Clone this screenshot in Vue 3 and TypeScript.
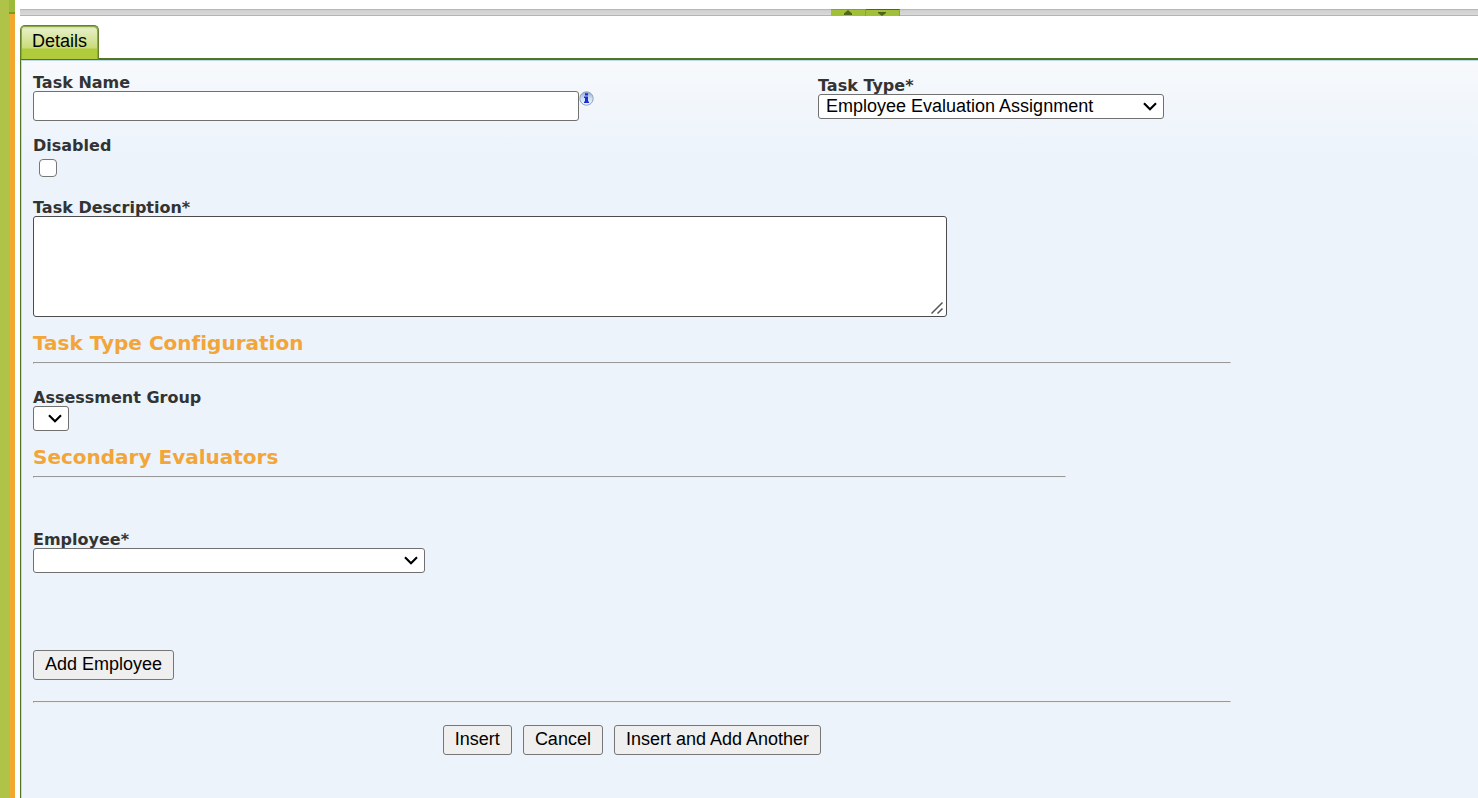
<script setup lang="ts">
import { ref } from 'vue'

const taskName = ref('')
const taskType = ref('evaluation')
const disabled = ref(false)
const description = ref('')
const group = ref('')
const employee = ref('')
</script>

<template>
  <div class="page">
    <aside class="rail"><div class="rail-green"></div><div class="rail-orange"></div></aside>
    <main class="main">
      <div class="splitter">
        <div class="splitter-buttons">
          <button type="button" class="split" aria-label="Expand up">
            <svg width="8" height="5" viewBox="0 0 8 5"><path d="M0 5V3.5L4 0L8 3.5V5Z" fill="#4d661c" /></svg>
          </button>
          <button type="button" class="split down" aria-label="Expand down">
            <svg width="8" height="4" viewBox="0 0 8 4"><path d="M0 0H8V1L4 4L0 1Z" fill="#4d661c" /></svg>
          </button>
        </div>
      </div>
      <nav class="tabs"><button type="button" class="tab">Details</button></nav>
      <form class="panel" @submit.prevent>
        <div class="top-row">
          <div class="field">
            <label for="task-name">Task Name</label>
            <div class="with-info">
              <input id="task-name" v-model="taskName" type="text" class="box" />
              <svg class="info" viewBox="0 0 15 15" role="img" aria-label="Information">
                <defs>
                  <linearGradient id="info-fill" x1="0" y1="0" x2="0" y2="1">
                    <stop offset="0" stop-color="#8fa5c6" />
                    <stop offset=".45" stop-color="#c9dcf5" />
                    <stop offset="1" stop-color="#f2f9ff" />
                  </linearGradient>
                </defs>
                <circle cx="7.5" cy="7.5" r="6.7" fill="url(#info-fill)" stroke="#8da4bd" />
                <path d="M6 2.3H9V4.4H6ZM5 5.4H9V10.5H10V12H5V10.5H6V7H5Z" fill="#1c2fd6" />
              </svg>
            </div>
          </div>
          <div class="field type-field">
            <label for="task-type">Task Type*</label>
            <select id="task-type" v-model="taskType" class="box type-select">
              <option value="evaluation">Employee Evaluation Assignment</option>
            </select>
          </div>
        </div>

        <div class="field disabled-field">
          <label for="disabled">Disabled</label>
          <input id="disabled" v-model="disabled" type="checkbox" class="check" />
        </div>

        <div class="field description-field">
          <label for="description">Task Description*</label>
          <textarea id="description" v-model="description" class="box"></textarea>
        </div>

        <h2>Task Type Configuration</h2>
        <hr />
        <div class="field group-field">
          <label for="group">Assessment Group</label>
          <select id="group" v-model="group" class="box group-select"><option value=""></option></select>
        </div>

        <section class="evaluators">
          <h2>Secondary Evaluators</h2>
          <hr />
          <div class="field employee-field">
            <label for="employee">Employee*</label>
            <select id="employee" v-model="employee" class="box employee-select"><option value=""></option></select>
          </div>
          <button type="button" class="btn add">Add Employee</button>
        </section>

        <hr class="end-rule" />
        <div class="actions">
          <button type="submit" class="btn">Insert</button>
          <button type="button" class="btn">Cancel</button>
          <button type="button" class="btn">Insert and Add Another</button>
        </div>
      </form>
    </main>
  </div>
</template>

<style>
body {
  margin: 0;
  background: #fff;
}
</style>

<style scoped>
.page {
  display: flex;
  min-height: 100vh;
  font-family: "Liberation Sans", Arial, sans-serif;
  font-size: 18px;
  color: #000;
}
* {
  box-sizing: border-box;
}
.rail {
  display: flex;
  flex: 0 0 15px;
}
.rail-green {
  width: 9px;
  background: #afc348;
}
.rail-orange {
  flex: 1;
  background: linear-gradient(#9dbb3a 12px, #7c9a2b 12px, #7c9a2b 14px, #f2a830 14px);
}
.main {
  display: flex;
  flex: 1;
  flex-direction: column;
  min-width: 0;
  padding: 9px 0 0 5px;
}
.splitter {
  display: flex;
  height: 7px;
  padding-left: 55.6%;
  background: linear-gradient(#b8b8b8 1px, #cecece 1px, #dadada 6px, #b4b4b4 6px);
}
.splitter-buttons {
  display: flex;
}
.split {
  display: flex;
  align-items: flex-end;
  justify-content: center;
  width: 35px;
  height: 7px;
  padding: 0 0 1px;
  border: 0;
  border-top: 1px solid #85a02d;
  border-right: 1px solid #88a630;
  background: #a1bf39;
}
.split.down {
  width: 34px;
  padding: 0;
  border-top-color: #50631b;
}
.split svg {
  display: block;
}
.tabs {
  display: flex;
  height: 35px;
  margin-top: 9px;
  background: linear-gradient(#527424, #527424) 38px 100% / 100% 2px no-repeat;
}
.tab {
  width: 79px;
  height: 35px;
  padding: 0 0 3px;
  border: 1px solid #63822a;
  border-bottom-color: #527424;
  border-radius: 5px 5px 0 0;
  background: linear-gradient(#c3d67b, #e5eec4 3px, #c9dc78 22px, #b0cb3b 23px);
  box-shadow: inset -1px 1px 0 #8ca84a, inset 1px 0 0 #8ca84a;
  font: inherit;
  color: #000;
}
.panel {
  flex: 1;
  padding: 13px 0 43px 12px;
  border-left: 1px solid #527424;
  background:
    linear-gradient(#bdd7ee, #bdd7ee) 0 0 / 100% 1px no-repeat,
    linear-gradient(#bdd7ee, #bdd7ee) 0 0 / 1px 100% no-repeat,
    linear-gradient(#f7f9fc, #ecf3fb 100px);
}
.field {
  display: flex;
  flex-direction: column;
  align-items: flex-start;
}
label {
  padding-top: 2px;
  font: bold 16px/16px "DejaVu Sans", Verdana, sans-serif;
  color: #333;
}
.top-row {
  display: grid;
  grid-template-columns: 785fr 660fr;
}
.type-field {
  padding-top: 3px;
}
.box {
  margin: 0;
  border: 1px solid #707070;
  border-radius: 3px;
  background-color: #fff;
  font: inherit;
  color: #000;
}
.with-info {
  display: flex;
  width: 100%;
}
.with-info input {
  width: 546px;
  height: 30px;
  padding: 0 6px;
}
.info {
  width: 15px;
  height: 15px;
}
select.box {
  height: 25px;
  padding: 0 28px 2px 7px;
  appearance: none;
  background-image: url("data:image/svg+xml,%3Csvg xmlns='http://www.w3.org/2000/svg' width='14' height='9' viewBox='0 0 14 9'%3E%3Cpath d='M1 1.2L7 7.2L13 1.2' fill='none' stroke='%23000' stroke-width='2.2'/%3E%3C/svg%3E");
  background-repeat: no-repeat;
  background-position: right 6px center;
}
.type-select {
  width: 346px;
}
select.group-select {
  width: 36px;
  padding: 0 20px 2px 7px;
}
.employee-select {
  width: 392px;
}
.disabled-field {
  margin-top: 15px;
}
.check {
  width: 18px;
  height: 18px;
  margin: 5px 6px 0;
  appearance: none;
  border: 1px solid #767676;
  border-radius: 4px;
  background: #fff;
}
.check:checked {
  background: #1a73e8;
}
.description-field {
  margin-top: 21px;
}
textarea.box {
  width: 914px;
  height: 101px;
  padding: 3px;
  border-color: #4c4c4c;
  resize: both;
}
textarea::-webkit-resizer {
  background: url("data:image/svg+xml,%3Csvg xmlns='http://www.w3.org/2000/svg' width='15' height='15'%3E%3Cpath d='M0.5 12.5L11.5 1.5M6.5 12.5L11.5 7.5' stroke='%23555' stroke-width='1.5'/%3E%3C/svg%3E") no-repeat;
}
h2 {
  margin: 14px 0 7px;
  font: bold 20px/24px "DejaVu Sans", Verdana, sans-serif;
  font-variant-ligatures: none;
  color: #f2a538;
}
hr {
  width: 82.9%;
  height: 2px;
  margin: 0;
  border: 1px solid #eee;
  border-top-color: #999;
  border-left-color: #999;
}
.group-field {
  margin-top: 24px;
}
.evaluators {
  width: 71.5%;
}
.evaluators hr {
  width: 100%;
}
.employee-field {
  margin-top: 52px;
}
.btn {
  height: 30px;
  padding: 0 11px 1px;
  border: 1px solid #767676;
  border-radius: 3px;
  background: #efefef;
  font: inherit;
  color: #000;
}
.add {
  display: block;
  margin: 77px 0 21px;
}
.actions {
  display: flex;
  justify-content: center;
  gap: 11px;
  width: 82.9%;
  margin-top: 22px;
}
</style>
